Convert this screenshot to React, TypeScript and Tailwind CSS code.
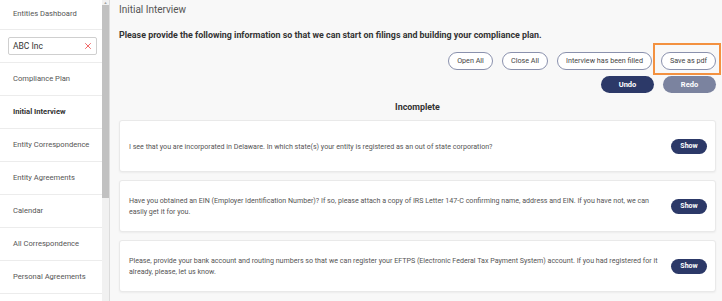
import {X} from "lucide-react";

const navItems = [
  "Compliance Plan",
  "Initial Interview",
  "Entity Correspondence",
  "Entity Agreements",
  "Calendar",
  "All Correspondence",
  "Personal Agreements",
];

const questions = [
  "I see that you are incorporated in Delaware. In which state(s) your entity is registered as an out of state corporation?",
  "Have you obtained an EIN (Employer Identification Number)? If so, please attach a copy of IRS Letter 147-C confirming name, address and EIN. If you have not, we can easily get it for you.",
  "Please, provide your bank account and routing numbers so that we can register your EFTPS (Electronic Federal Tax Payment System) account. If you had registered for it already, please, let us know.",
];

function Sidebar() {
  return (
    <div className="flex h-full shrink-0">
      <div className="w-[102px] bg-white flex flex-col">
        <div className="h-[30px] flex items-start pt-[8px] pl-[13px] text-[7.6px] text-[#555] border-b border-[#ececec]">
          Entities Dashboard
        </div>
        <div className="h-[33px] flex items-center pl-[8px] pr-[5px] border-b border-[#ececec]">
          <div className="w-[89px] h-[18px] border border-[#cfcfcf] rounded-[2px] flex items-center justify-between pl-[4px] pr-[3px]">
            <span className="text-[8.5px] text-[#333]">ABC Inc</span>
            <X size={10} strokeWidth={2.2} color="#f05a5a" />
          </div>
        </div>
        {navItems.map((item) => (
          <div
            key={item}
            className={`h-[33px] flex items-center pl-[13px] text-[7.6px] border-b border-[#ececec] ${
              item === "Initial Interview" ? "font-bold text-[#333]" : "text-[#555]"
            }`}
          >
            {item}
          </div>
        ))}
      </div>
      <div className="w-[8px] bg-[#f1f1f1] flex flex-col items-center border-r border-[#dcdcdc]">
        <div className="h-[5px] text-[4px] leading-[5px] text-[#a3a3a3]">▲</div>
        <div className="w-[7px] h-[193px] bg-[#c1c1c1]" />
      </div>
    </div>
  );
}

function OutlineButton({label, width, highlight}: {label: string; width: string; highlight?: boolean}) {
  return (
    <div className="relative flex">
      <button className={`block h-[18px] ${width} rounded-full border border-[#8a91ad] bg-white text-[7.2px] text-[#444]`}>
        {label}
      </button>
      {highlight && (
        <div className="absolute -left-[8px] -right-[5px] -top-[9px] -bottom-[5px] border-2 border-[#f39140]" />
      )}
    </div>
  );
}

export default function App() {
  return (
    <div className="w-[722px] h-[301px] flex overflow-hidden bg-[#f8f8f8] font-['Roboto',sans-serif]">
      <Sidebar />
      <div className="flex-1 flex flex-col pl-[9px] pr-[6px]">
        <div className="h-[19px] flex items-center text-[10px] text-[#555]">Initial Interview</div>
        <div className="h-[30px] flex items-center pt-[3px] text-[8.9px] font-bold text-[#333]">
          Please provide the following information so that we can start on filings and building your compliance plan.
        </div>
        <div className="flex justify-end gap-[9px] mt-[3px]">
          <OutlineButton label="Open All" width="w-[45px]" />
          <OutlineButton label="Close All" width="w-[46px]" />
          <OutlineButton label="Interview has been filled" width="w-[95px]" />
          <OutlineButton label="Save as pdf" width="w-[55px]" highlight />
        </div>
        <div className="flex justify-end gap-[9px] mt-[6px]">
          <button className="block w-[53px] h-[17px] rounded-full bg-[#2c3968] text-white text-[7.5px] font-bold">Undo</button>
          <button className="block w-[53px] h-[17px] rounded-full bg-[#7b839f] text-white text-[7.5px] font-bold">Redo</button>
        </div>
        <div className="h-[27px] flex items-center justify-center pt-[2px] text-[8.9px] font-bold text-[#333]">Incomplete</div>
        <div className="flex flex-col gap-[8px]">
          {questions.map((q) => (
            <div
              key={q}
              className="h-[52px] bg-white rounded-[3px] border border-[#e9e9e9] shadow-[0_1px_2px_rgba(0,0,0,0.05)] flex items-center justify-between pl-[9px] pr-[8px]"
            >
              <p className="text-[7.1px] leading-[11px] text-[#555] w-[535px]">{q}</p>
              <button className="block w-[36px] h-[15px] rounded-full bg-[#2c3968] text-white text-[7px] font-bold">Show</button>
            </div>
          ))}
        </div>
      </div>
    </div>
  );
}
